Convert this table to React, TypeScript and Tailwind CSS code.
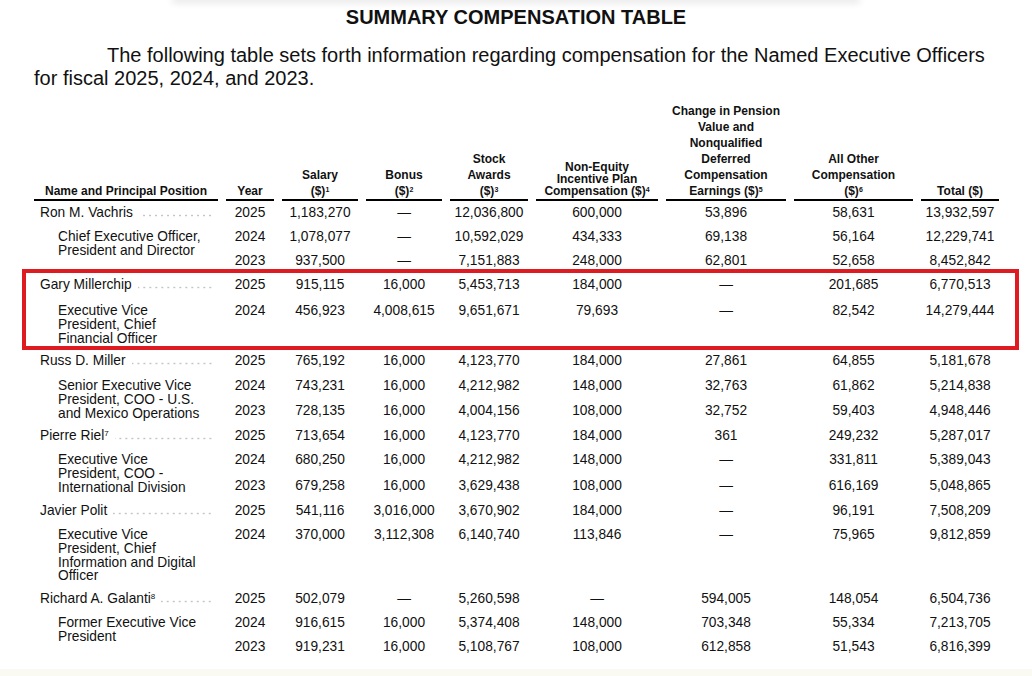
import React from 'react';

type Person = {
  name: string;
  sup?: string;
  title: string[];
  rows: { h: string; cells: string[] }[];
};

const people: Person[] = [
  {
    name: 'Ron M. Vachris',
    title: ['Chief Executive Officer,', 'President and Director'],
    rows: [
      { h: 'h-[24px]', cells: ['2025', '1,183,270', '—', '12,036,800', '600,000', '53,896', '58,631', '13,932,597'] },
      { h: 'h-[24px]', cells: ['2024', '1,078,077', '—', '10,592,029', '434,333', '69,138', '56,164', '12,229,741'] },
      { h: 'h-[24px]', cells: ['2023', '937,500', '—', '7,151,883', '248,000', '62,801', '52,658', '8,452,842'] },
    ],
  },
  {
    name: 'Gary Millerchip',
    title: ['Executive Vice', 'President, Chief', 'Financial Officer'],
    rows: [
      { h: 'h-[26px]', cells: ['2025', '915,115', '16,000', '5,453,713', '184,000', '—', '201,685', '6,770,513'] },
      { h: 'h-[50px]', cells: ['2024', '456,923', '4,008,615', '9,651,671', '79,693', '—', '82,542', '14,279,444'] },
    ],
  },
  {
    name: 'Russ D. Miller',
    title: ['Senior Executive Vice', 'President, COO - U.S.', 'and Mexico Operations'],
    rows: [
      { h: 'h-[25px]', cells: ['2025', '765,192', '16,000', '4,123,770', '184,000', '27,861', '64,855', '5,181,678'] },
      { h: 'h-[25px]', cells: ['2024', '743,231', '16,000', '4,212,982', '148,000', '32,763', '61,862', '5,214,838'] },
      { h: 'h-[25px]', cells: ['2023', '728,135', '16,000', '4,004,156', '108,000', '32,752', '59,403', '4,948,446'] },
    ],
  },
  {
    name: 'Pierre Riel',
    sup: '7',
    title: ['Executive Vice', 'President, COO -', 'International Division'],
    rows: [
      { h: 'h-[24px]', cells: ['2025', '713,654', '16,000', '4,123,770', '184,000', '361', '249,232', '5,287,017'] },
      { h: 'h-[26px]', cells: ['2024', '680,250', '16,000', '4,212,982', '148,000', '—', '331,811', '5,389,043'] },
      { h: 'h-[25px]', cells: ['2023', '679,258', '16,000', '3,629,438', '108,000', '—', '616,169', '5,048,865'] },
    ],
  },
  {
    name: 'Javier Polit',
    title: ['Executive Vice', 'President, Chief', 'Information and Digital', 'Officer'],
    rows: [
      { h: 'h-[24px]', cells: ['2025', '541,116', '3,016,000', '3,670,902', '184,000', '—', '96,191', '7,508,209'] },
      { h: 'h-[64px]', cells: ['2024', '370,000', '3,112,308', '6,140,740', '113,846', '—', '75,965', '9,812,859'] },
    ],
  },
  {
    name: 'Richard A. Galanti',
    sup: '8',
    title: ['Former Executive Vice', 'President'],
    rows: [
      { h: 'h-[24px]', cells: ['2025', '502,079', '—', '5,260,598', '—', '594,005', '148,054', '6,504,736'] },
      { h: 'h-[24px]', cells: ['2024', '916,615', '16,000', '5,374,408', '148,000', '703,348', '55,334', '7,213,705'] },
      { h: 'h-[24px]', cells: ['2023', '919,231', '16,000', '5,108,767', '108,000', '612,858', '51,543', '6,816,399'] },
    ],
  },
];

const th = 'border-b-2 border-black p-0 align-bottom text-center text-[12px] font-bold leading-[16px]';
const td = 'p-0 pt-[5px] align-top text-center leading-[14px] whitespace-nowrap';
const Sup = ({ n }: { n: string }) => <sup className="text-[7px]">{n}</sup>;

const App = () => {
  return (
    <div className="relative min-h-[676px] bg-white font-['Liberation_Sans',Arial,sans-serif] text-[#111]">
      <div className="mx-[175px] h-0 shadow-[0_0_7px_3px_rgba(0,0,0,0.1)]" />
      <h1 className="pt-[6px] text-center text-[20px] font-bold leading-[23px]">
        SUMMARY COMPENSATION TABLE
      </h1>
      <p className="mt-[15px] px-[34px] indent-[73px] text-[20px] leading-[23px]">
        The following table sets forth information regarding compensation for the Named Executive Officers
        <br />
        for fiscal 2025, 2024, and 2023.
      </p>

      <table className="ml-[26px] mt-[13px] w-[981px] table-fixed border-separate border-spacing-x-2 border-spacing-y-0 text-[13.75px]">
        <colgroup>
          <col className="w-[184px]" />
          <col className="w-[48px]" />
          <col className="w-[76px]" />
          <col className="w-[76px]" />
          <col className="w-[78px]" />
          <col className="w-[122px]" />
          <col className="w-[120px]" />
          <col className="w-[119px]" />
          <col className="w-[78px]" />
        </colgroup>
        <thead>
          <tr>
            <th className={th}>Name and Principal Position</th>
            <th className={th}>Year</th>
            <th className={th}>
              Salary
              <br />
              ($)<Sup n="1" />
            </th>
            <th className={th}>
              Bonus
              <br />
              ($)<Sup n="2" />
            </th>
            <th className={th}>
              Stock
              <br />
              Awards
              <br />
              ($)<Sup n="3" />
            </th>
            <th className={th}>
              <div className="pb-[2px] leading-[12px]">
                Non-Equity
                <br />
                Incentive Plan
                <br />
                Compensation ($)<Sup n="4" />
              </div>
            </th>
            <th className={th}>
              Change in Pension
              <br />
              Value and
              <br />
              Nonqualified
              <br />
              Deferred
              <br />
              Compensation
              <br />
              Earnings ($)<Sup n="5" />
            </th>
            <th className={th}>
              All Other
              <br />
              Compensation
              <br />
              ($)<Sup n="6" />
            </th>
            <th className={th}>Total ($)</th>
          </tr>
        </thead>
        <tbody>
          {people.map((person) =>
            person.rows.map((row, index) => (
              <tr key={person.name + row.cells[0]} className={row.h}>
                {index === 0 && (
                  <td className="p-0 pl-[6px] pr-[5px] pt-[5px] align-top leading-[14px]">
                    <div className="flex items-baseline">
                      <span className="whitespace-nowrap">
                        {person.name}
                        {person.sup && <sup className="text-[8px]">{person.sup}</sup>}
                      </span>
                      {/* dot leader */}
                      <span className="ml-[6px] h-[3px] flex-1 bg-[radial-gradient(circle,#c4c4c4_0.8px,transparent_1.2px)] bg-[length:6px_3px] bg-right bg-repeat-x" />
                    </div>
                  </td>
                )}
                {index === 1 && (
                  <td
                    rowSpan={person.rows.length - 1}
                    className="p-0 pl-[24px] pt-[5px] align-top leading-[13.75px] whitespace-nowrap"
                  >
                    {person.title.map((line) => (
                      <div key={line}>{line}</div>
                    ))}
                  </td>
                )}
                {row.cells.map((cell, i) => (
                  <td key={i} className={td}>
                    {cell}
                  </td>
                ))}
              </tr>
            )),
          )}
        </tbody>
      </table>

      <div className="pointer-events-none absolute left-[22px] top-[269px] h-[81px] w-[997px] border-4 border-[#df1b22]" />

      <div className="mt-[10px] h-[20px] bg-[#fbfaf2]" />
    </div>
  );
};

export default App;
